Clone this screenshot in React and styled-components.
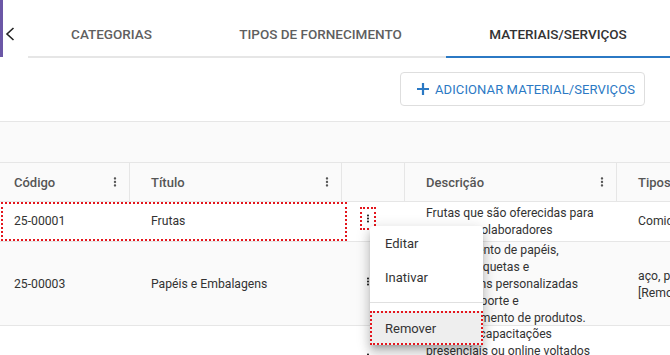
import React from 'react';
import styled, { createGlobalStyle } from 'styled-components';

const GlobalStyle = createGlobalStyle`
  body {
    margin: 0;
    background: #fff;
    font-family: Roboto, "Noto Sans", "Liberation Sans", sans-serif;
  }
`;

const LINE = '#e6e6e6';
const BLUE = '#2b79c4';
const MARK = '#e3161d';

const Page = styled.div`
  position: relative;
  width: 670px;
  height: 355px;
  overflow: hidden;
  color: #333;
`;

const TopBar = styled.div`
  display: flex;
  height: 58px;
`;

const SideAccent = styled.div`
  width: 3px;
  height: 57px;
  background: #6b57a6;
`;

const BackButton = styled.button`
  width: 25px;
  height: 58px;
  border: 0;
  background: none;
  padding: 10px 0 0 2px;
  display: flex;
  align-items: center;
  cursor: pointer;
`;

const TabList = styled.div`
  display: flex;
`;

const Tab = styled.div`
  box-sizing: border-box;
  width: ${(p) => p.$width}px;
  height: 58px;
  padding-top: 12px;
  display: flex;
  align-items: center;
  justify-content: center;
  border-bottom: 2px solid ${(p) => (p.$active ? BLUE : LINE)};
  font-size: 13.5px;
  font-weight: 500;
  text-transform: uppercase;
  color: ${(p) => (p.$active ? '#333' : '#5f5f5f')};
`;

const ActionBar = styled.div`
  display: flex;
  justify-content: flex-end;
  padding: 14px 25px 15px 0;
`;

const AddButton = styled.button`
  box-sizing: border-box;
  height: 34px;
  padding: 0 9px 0 15px;
  display: flex;
  align-items: center;
  gap: 5px;
  background: #fff;
  border: 1px solid #dedede;
  border-radius: 4px;
  font-family: inherit;
  font-size: 13px;
  letter-spacing: 0.1px;
  text-transform: uppercase;
  color: ${BLUE};
  cursor: pointer;
`;

const Band = styled.div`
  height: 40px;
  border-top: 1px solid ${LINE};
  background: #fafafa;
`;

const columns = '130px 212px 63px 212px 220px';

const HeaderRow = styled.div`
  display: grid;
  grid-template-columns: ${columns};
  height: 40px;
  box-sizing: border-box;
  border-top: 1px solid ${LINE};
  border-bottom: 1px solid ${LINE};
  background: #fafafa;
`;

const HeaderCell = styled.div`
  display: flex;
  align-items: center;
  justify-content: space-between;
  padding: 0 7px 0 ${(p) => p.$pad}px;
  border-right: 1px solid ${LINE};
  font-size: 13px;
  font-weight: 500;
  color: #555;
  white-space: nowrap;
`;

const Row = styled.div`
  display: grid;
  grid-template-columns: ${columns};
  box-sizing: border-box;
  height: ${(p) => (p.$height ? `${p.$height}px` : 'auto')};
  border-bottom: 1px solid ${LINE};
  background: ${(p) => (p.$shaded ? '#fafafa' : '#fff')};
`;

const Cell = styled.div`
  display: flex;
  flex-direction: column;
  justify-content: center;
  padding-left: ${(p) => p.$pad}px;
  font-size: 12.2px;
  line-height: 17px;
  color: #333;
  white-space: nowrap;
`;

const ActionCell = styled.div`
  display: flex;
  align-items: center;
  padding-left: 20px;
`;

const KebabButton = styled.button`
  width: 12px;
  height: 19px;
  margin-top: -6px;
  padding: 0;
  border: 0;
  background: none;
  display: flex;
  align-items: center;
  justify-content: center;
  color: #222;
  outline: ${(p) => (p.$marked ? `2px dotted ${MARK}` : 'none')};
`;

const Mark = styled.div`
  position: absolute;
  left: 1px;
  top: 202px;
  width: 346px;
  height: 39px;
  box-sizing: border-box;
  border: 2px dotted ${MARK};
  pointer-events: none;
`;

const Menu = styled.ul`
  position: absolute;
  left: 370px;
  top: 226px;
  width: 113px;
  margin: 0;
  padding: 0;
  list-style: none;
  background: #fff;
  border-radius: 4px;
  box-shadow: 0 5px 5px -3px rgba(0, 0, 0, 0.2), 0 8px 10px 1px rgba(0, 0, 0, 0.14),
    0 3px 14px 2px rgba(0, 0, 0, 0.12);
`;

const MenuItem = styled.li`
  height: 34px;
  display: flex;
  align-items: center;
  padding-left: 15px;
  font-size: 13px;
  color: #333;
  background: ${(p) => (p.$active ? '#eeeeee' : 'transparent')};
  outline: ${(p) => (p.$active ? `2px dotted ${MARK}` : 'none')};
  outline-offset: -2px;
`;

const MenuDivider = styled.li`
  height: 1px;
  margin: 8px 0;
  background: #e0e0e0;
`;

const Kebab = ({ size }) => (
  <svg width={size} height={size} viewBox="0 0 24 24" fill="currentColor">
    <path d="M12 8c1.1 0 2-.9 2-2s-.9-2-2-2-2 .9-2 2 .9 2 2 2zm0 2c-1.1 0-2 .9-2 2s.9 2 2 2 2-.9 2-2-.9-2-2-2zm0 6c-1.1 0-2 .9-2 2s.9 2 2 2 2-.9 2-2-.9-2-2-2z" />
  </svg>
);

const tabs = [
  { label: 'Categorias', width: 167 },
  { label: 'Tipos de fornecimento', width: 251 },
  { label: 'Materiais/Serviços', width: 224, active: true },
];

const rows = [
  {
    code: '25-00001',
    title: 'Frutas',
    description: ['Frutas que são oferecidas para', 'pessoas colaboradores'],
    types: ['Comida, bebidas'],
    height: 40,
    marked: true,
  },
  {
    code: '25-00003',
    title: 'Papéis e Embalagens',
    description: [
      'Fornecimento de papéis,',
      'rótulos, etiquetas e',
      'embalagens personalizadas',
      'para transporte e',
      'armazenamento de produtos.',
    ],
    types: ['aço, papel, plástico', '[Removido]'],
    height: 84,
    shaded: true,
  },
  {
    code: '25-00004',
    title: 'Treinamentos',
    description: [
      'Oferta de capacitações',
      'presenciais ou online voltados',
      'ao desenvolvimento das',
      'pessoas colaboradoras.',
    ],
    types: ['Serviços'],
  },
];

const App = () => (
  <Page>
    <GlobalStyle />
    <TopBar>
      <SideAccent />
      <BackButton aria-label="Voltar">
        <svg width="10" height="14" viewBox="0 0 10 14">
          <polyline points="8.5,1 2,7 8.5,13" fill="none" stroke="#222" strokeWidth="1.6" />
        </svg>
      </BackButton>
      <TabList>
        {tabs.map((tab) => (
          <Tab key={tab.label} $width={tab.width} $active={tab.active}>
            {tab.label}
          </Tab>
        ))}
      </TabList>
    </TopBar>

    <ActionBar>
      <AddButton>
        <svg width="14" height="14" viewBox="0 0 14 14">
          <path d="M7 1v12M1 7h12" stroke={BLUE} strokeWidth="2.2" />
        </svg>
        Adicionar Material/Serviços
      </AddButton>
    </ActionBar>

    <Band />

    <HeaderRow>
      <HeaderCell $pad={14}>
        Código
        <Kebab size={14} />
      </HeaderCell>
      <HeaderCell $pad={21}>
        Título
        <Kebab size={14} />
      </HeaderCell>
      <HeaderCell $pad={21} />
      <HeaderCell $pad={21}>
        Descrição
        <Kebab size={14} />
      </HeaderCell>
      <HeaderCell $pad={21}>Tipos de fornecimento</HeaderCell>
    </HeaderRow>

    {rows.map((row) => (
      <Row key={row.code} $height={row.height} $shaded={row.shaded}>
        <Cell $pad={14}>{row.code}</Cell>
        <Cell $pad={21}>{row.title}</Cell>
        <ActionCell>
          <KebabButton $marked={row.marked} aria-label="Ações">
            <Kebab size={19} />
          </KebabButton>
        </ActionCell>
        <Cell $pad={21}>
          {row.description.map((line) => (
            <span key={line}>{line}</span>
          ))}
        </Cell>
        <Cell $pad={21}>
          {row.types.map((line) => (
            <span key={line}>{line}</span>
          ))}
        </Cell>
      </Row>
    ))}

    <Mark />

    <Menu>
      <MenuItem>Editar</MenuItem>
      <MenuItem>Inativar</MenuItem>
      <MenuDivider />
      <MenuItem $active>Remover</MenuItem>
    </Menu>
  </Page>
);

export default App;
